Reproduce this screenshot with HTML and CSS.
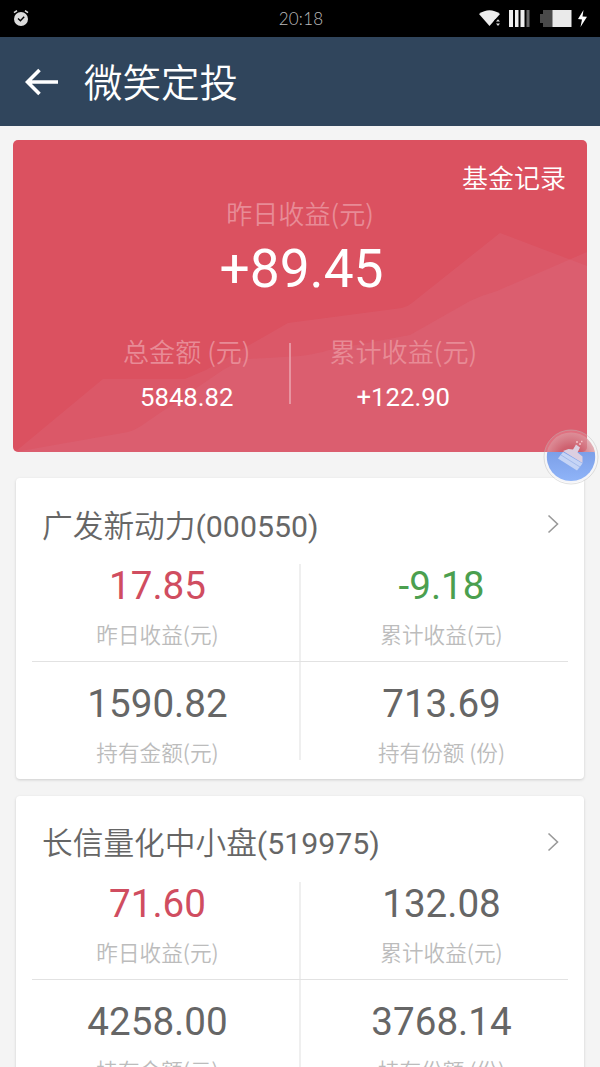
FILE: index.html
```html
<!DOCTYPE html>
<html lang="zh-CN">
<head>
    <meta charset="UTF-8">
    <meta name="viewport" content="width=device-width, initial-scale=1.0">
    <title>微笑定投</title>
    <link rel="stylesheet" href="styles.css">
</head>
<body>
    <div class="status-bar">
        <svg class="alarm" width="16" height="18" viewBox="0 0 16 18">
            <circle cx="8" cy="10" r="7" fill="#dcdcdc"/>
            <path d="M1 3.6 L4 1.6 M15 3.6 L12 1.6" stroke="#dcdcdc" stroke-width="1.6"/>
            <path d="M5 9.6 L7.4 11.8 L11.2 7.8" fill="none" stroke="#000" stroke-width="1.4"/>
        </svg>
        <span class="time">20:18</span>
        <svg class="signals" width="110" height="20" viewBox="0 0 110 20">
            <path d="M0 5 Q10.5 -2.5 21 5 L10.5 17 Z" fill="#eee"/>
            <circle cx="19" cy="14" r="4.5" fill="#000"/>
            <path d="M17 12.6 L19 10.2 L21 12.6 Z M17 14.6 L19 17 L21 14.6 Z" fill="#ddd"/>
            <path d="M30 1h4v17h-4z M36 1h3.5v17h-3.5z M41.5 1h4v17h-4z" fill="#eee"/>
            <path d="M47.5 1h3v17h-3z" fill="#666"/>
            <path d="M64 1h10v17h-10v-4h-3v-9h3z" fill="#4a4a4a"/>
            <path d="M73.5 1h19v17h-19z" fill="#eaeaea"/>
            <path d="M104.5 1 L99 10 L103 10.5 L101.5 18 L108 7.8 L103.5 7.5 Z" fill="#fff"/>
        </svg>
    </div>

    <div class="header">
        <svg width="34" height="28" viewBox="0 0 34 28">
            <path d="M33 14 H3 M14.5 2 L2.5 14 L14.5 26" fill="none" stroke="#fff" stroke-width="3.6"/>
        </svg>
        <h1>微笑定投</h1>
    </div>

    <div class="summary">
        <svg class="mountains" width="574" height="312" viewBox="0 0 574 312">
            <path d="M2 312 L90 239 H172 L193 230 L275 183 L389 168 Q394 167 399 163 L487 93 L574 126 V312 Z"/>
            <path d="M2 312 L115 292 Q122 290 128 286 L210 230 Q220 224 235 219 L287 216 Q303 214 316 210 L397 195 L457 161 Q470 155 484 151 L574 112 V312 Z"/>
        </svg>
        <div class="record">基金记录</div>
        <div class="summary-label">昨日收益(元)</div>
        <div class="total">+89.45</div>
        <div class="summary-row">
            <div class="summary-col">
                <div class="summary-label">总金额 (元)</div>
                <div class="amount">5848.82</div>
            </div>
            <div class="summary-line"></div>
            <div class="summary-col right">
                <div class="summary-label">累计收益(元)</div>
                <div class="amount">+122.90</div>
            </div>
        </div>
    </div>

    <div class="fund">
        <div class="fund-title">
            <h2>广发新动力<span>(000550)</span></h2>
            <svg width="12" height="20" viewBox="0 0 12 20"><path d="M1.5 1.5 L10.5 10 L1.5 18.5"/></svg>
        </div>
        <div class="fund-row">
            <div class="cell"><div class="value red">17.85</div><div class="label">昨日收益(元)</div></div>
            <div class="cell"><div class="value green">-9.18</div><div class="label">累计收益(元)</div></div>
        </div>
        <hr>
        <div class="fund-row second">
            <div class="cell"><div class="value">1590.82</div><div class="label">持有金额(元)</div></div>
            <div class="cell"><div class="value">713.69</div><div class="label">持有份额 (份)</div></div>
        </div>
    </div>

    <div class="fund">
        <div class="fund-title">
            <h2>长信量化中小盘<span>(519975)</span></h2>
            <svg width="12" height="20" viewBox="0 0 12 20"><path d="M1.5 1.5 L10.5 10 L1.5 18.5"/></svg>
        </div>
        <div class="fund-row">
            <div class="cell"><div class="value red">71.60</div><div class="label">昨日收益(元)</div></div>
            <div class="cell"><div class="value">132.08</div><div class="label">累计收益(元)</div></div>
        </div>
        <hr>
        <div class="fund-row second">
            <div class="cell"><div class="value">4258.00</div><div class="label">持有金额(元)</div></div>
            <div class="cell"><div class="value">3768.14</div><div class="label">持有份额 (份)</div></div>
        </div>
    </div>

    <!-- 悬浮清理按钮 -->
    <svg class="cleaner" width="56" height="56" viewBox="0 0 56 56">
        <defs>
            <radialGradient id="glass" cx="50%" cy="55%" r="55%">
                <stop offset="0" stop-color="#c44a5c" stop-opacity="0.9"/>
                <stop offset="0.5" stop-color="#cb5f6d" stop-opacity="0.8"/>
                <stop offset="1" stop-color="#dc9aa2" stop-opacity="0.7"/>
            </radialGradient>
            <linearGradient id="water" x1="0" y1="0" x2="0" y2="1">
                <stop offset="0" stop-color="#7c9fe8"/>
                <stop offset="1" stop-color="#8fb4f8"/>
            </linearGradient>
        </defs>
        <circle cx="28" cy="28" r="27" fill="#fff" fill-opacity="0.12" stroke="#bbb" stroke-opacity="0.45"/>
        <circle cx="28" cy="28" r="24.5" fill="url(#glass)"/>
        <path d="M2.5 23 A26 26 0 1 0 53.5 23 Z" fill="#f5f5f8"/>
        <path d="M4.3 23 A24.2 24.2 0 1 0 51.7 23 Z" fill="url(#water)"/>
        <path d="M33 15.5 L37 18.5 L34.5 23.5 L39.5 27.5 L39.5 34 L20 22 L25.5 20 L30 20.5 Z" fill="#dccfe0"/>
        <path d="M20 23 L39.5 34.5 L34 41.5 L15 29.5 Z" fill="#c5d4f5"/>
        <path d="M18 26 L37 38" stroke="#a3baeb"/>
        <path d="M33 13h2 M36 15h2 M38 12.5h1.5" stroke="#f3c3ca" stroke-width="1.4"/>
    </svg>
</body>
</html>
```
FILE: styles.css
```css
body {
    margin: 0;
    height: 1067px;
    overflow: hidden;
    background-color: #f4f4f4;
    font-family: Roboto, "Noto Sans CJK SC", sans-serif;
    color: #666;
}
svg {
    display: block;
}
h1, h2 {
    margin: 0;
    font-family: "Noto Sans CJK SC", sans-serif;
}
.status-bar {
    display: grid;
    grid-template-columns: 1fr auto 1fr;
    align-items: center;
    height: 37px;
    box-sizing: border-box;
    padding: 0 11px 0 13px;
    background-color: #000;
}
.alarm {
    margin-top: -2px;
}
.time {
    font-family: Lato, sans-serif;
    font-size: 17px;
    font-weight: 300;
    letter-spacing: 0.2px;
    color: #bbb;
}
.signals {
    justify-self: end;
}
.header {
    display: flex;
    align-items: center;
    gap: 25px;
    height: 89px;
    padding-left: 25px;
    background-color: #30455c;
}
.header h1 {
    padding-bottom: 4px;
    font-size: 38.5px;
    font-weight: 350;
    line-height: 60px;
    color: #fff;
}
/* 收益总览 */
.summary {
    position: relative;
    height: 312px;
    margin: 14px 13px 26px;
    border-radius: 5px;
    overflow: hidden;
    background-color: #db5160;
    color: #fff;
    text-align: center;
}
.mountains {
    position: absolute;
    left: 0;
    top: 0;
    fill: #dd788a;
    fill-opacity: 0.2;
}
.summary > div {
    position: relative;
}
.record {
    padding: 22px 21px 0 0;
    text-align: right;
    font-size: 26px;
    font-weight: 350;
    line-height: 34px;
}
.summary-label {
    font-family: "Noto Sans CJK SC", sans-serif;
    font-size: 26.1px;
    font-weight: 350;
    line-height: 34px;
    color: #e88b96;
}
.total {
    padding: 7px 0 0 3px;
    font-size: 53.3px;
    line-height: 64px;
}
.summary-row {
    display: flex;
    padding: 33px 71px 0;
}
.summary-col {
    width: 206px;
}
.summary-col.right {
    width: 226px;
}
.summary-line {
    width: 2px;
    height: 61px;
    margin: 9px 0 0 -1px;
    background-color: #e794a0;
}
.amount {
    padding-top: 13px;
    font-size: 25.7px;
    line-height: 32px;
}
/* 基金卡片 */
.fund {
    height: 301px;
    margin: 0 16px 16.5px;
    border-radius: 4px;
    background-color: #fff;
    box-shadow: 0 1px 3px rgba(0, 0, 0, 0.16);
}
.fund-title {
    display: flex;
    align-items: center;
    justify-content: space-between;
    height: 66px;
    padding: 13px 25px 7px 26px;
}
.fund-title h2 {
    padding-top: 2px;
    font-size: 30.7px;
    font-weight: 350;
    line-height: 44px;
}
.fund-title span {
    font-family: Roboto, sans-serif;
    font-size: 30.3px;
    font-weight: 400;
}
.fund-title path {
    fill: none;
    stroke: #999;
    stroke-width: 1.6;
}
.fund-row {
    display: flex;
    height: 97px;
}
.fund-row.second {
    height: 98px;
}
.cell {
    width: 50%;
    box-sizing: border-box;
    text-align: center;
}
.cell:first-child {
    width: 285px;
    border-right: 2px solid #efefef;
}
.cell:last-child {
    width: 283px;
    padding-right: 2px;
}
.second .cell {
    padding-top: 20px;
}
.fund hr {
    height: 1px;
    margin: 0 16px;
    border: none;
    background-color: #e2e2e2;
}
.value {
    font-size: 38.6px;
    line-height: 43px;
}
.red {
    color: #d04d60;
}
.green {
    color: #4b9f4f;
}
.label {
    padding-top: 19px;
    font-family: "Noto Sans CJK SC", sans-serif;
    font-size: 21.6px;
    font-weight: 350;
    line-height: 16px;
    color: #bcbcbc;
}
.cleaner {
    position: absolute;
    left: 543px;
    top: 429px;
}
```
